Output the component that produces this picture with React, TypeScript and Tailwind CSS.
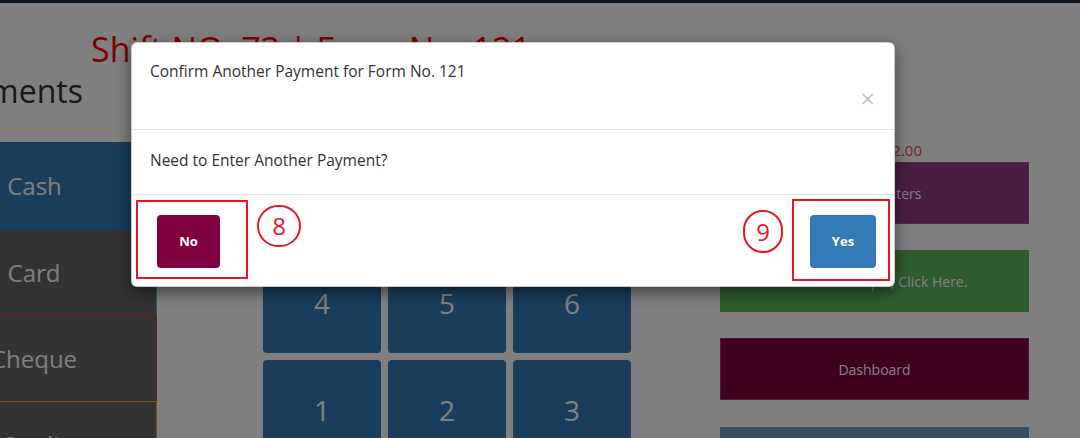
import React from "react";

const KEYS = ["7", "8", "9", "4", "5", "6", "1", "2", "3", "0", "00", "."];

function PayMethod({
  label,
  className,
}: {
  label: string;
  className: string;
}) {
  return (
    <div
      className={`flex items-center justify-center text-[24px] text-white ${className}`}
    >
      {label}
    </div>
  );
}

function Annotation({ n, className }: { n: number; className: string }) {
  return (
    <div
      className={`flex shrink-0 items-center justify-center rounded-full border-2 border-[#e8161f] text-[24px] leading-none text-[#e8161f] ${className}`}
    >
      {n}
    </div>
  );
}

export default function App() {
  return (
    <div className="relative h-[438px] w-[1080px] overflow-hidden bg-white font-['Open_Sans',sans-serif] text-[#333]">
      {/* page behind the dialog */}
      <div className="h-[3px] bg-[#1d2c45]" />
      <h1 className="mt-[29px] whitespace-nowrap pl-[91px] text-[34px] leading-none text-[#ff0000]">
        Shift NO. 73 | Form No. 121
      </h1>
      <h2 className="-ml-[64px] mt-[9px] whitespace-nowrap text-[32px] leading-none text-[#333]">
        Payments
      </h2>

      <div className="mt-[35px] flex items-start">
        <div className="-ml-[88px] flex w-[245px] shrink-0 flex-col">
          <PayMethod label="Cash" className="h-[88px] bg-[#337ab7]" />
          <PayMethod
            label="Card"
            className="h-[85px] border-r border-[#46b8da] bg-[#666]"
          />
          <PayMethod
            label="Cheque"
            className="h-[86px] border-r border-t border-[#d43f3a] bg-[#666]"
          />
          <PayMethod
            label="Credit"
            className="h-[86px] border-r border-t border-[#eea236] bg-[#666]"
          />
        </div>

        <div className="ml-[106px] mt-[4px] grid shrink-0 grid-cols-[118px_118px_118px] gap-[7px]">
          {KEYS.map((k) => (
            <div
              key={k}
              className="flex h-[100px] items-center justify-center rounded-[4px] bg-[#337ab7] text-[28px] text-white"
            >
              {k}
            </div>
          ))}
        </div>

        <div className="ml-[89px] flex w-[309px] shrink-0 flex-col">
          <div className="-mt-[2px] w-[202px] text-right text-[15px] leading-[20px] text-[#d9534f]">
            Balance : 12.00
          </div>
          <div className="mt-[2px] flex h-[62px] items-center justify-center border border-[#a3529a] bg-[#923c84] text-[14px] text-white">
            View Counters
          </div>
          <div className="mt-[26px] flex h-[62px] items-center justify-center bg-[#5cb85c] text-[14px] text-white">
            To Print Receipts, Click Here.
          </div>
          <div className="mt-[26px] flex h-[62px] items-center justify-center border border-[#a0326a] bg-[#800040] text-[14px] text-white">
            Dashboard
          </div>
          <div className="mt-[27px] flex h-[62px] items-center justify-center bg-[#769ebc] text-[14px] text-white">
            Logout
          </div>
        </div>
      </div>

      {/* backdrop */}
      <div className="absolute inset-0 bg-black/50" />

      {/* dialog */}
      <div className="absolute left-[131px] top-[42px] w-[764px] rounded-[6px] border border-black/20 bg-white shadow-[0_5px_15px_rgba(0,0,0,0.5)]">
        <div className="border-b border-[#e5e5e5] pb-[21px] pl-[18px] pr-[19px] pt-[18px]">
          <div className="text-[15.5px] leading-[21px]">
            Confirm Another Payment for Form No. 121
          </div>
          <div className="mt-[5px] flex h-[21px] items-center justify-end">
            <button className="text-[26px] leading-none text-black/25">
              ×
            </button>
          </div>
        </div>

        <div className="border-b border-[#e5e5e5] pb-[23px] pl-[18px] pt-[20px] text-[15.5px] leading-[21px]">
          Need to Enter Another Payment?
        </div>

        <div className="flex items-start justify-between px-[4px] pb-[5px] pt-[4px]">
          <div className="mt-[1px] flex items-start">
            <div className="h-[79px] w-[112px] border-2 border-[#e8161f] pl-[19px] pt-[13px]">
              <button className="flex h-[53px] w-[63px] items-center justify-center rounded-[4px] bg-[#800040] text-[13px] font-bold text-white">
                No
              </button>
            </div>
            <Annotation n={8} className="ml-[9px] mt-[5px] h-[42px] w-[44px]" />
          </div>

          <div className="flex items-start">
            <Annotation n={9} className="mr-[9px] mt-[11px] h-[43px] w-[40px]" />
            <div className="h-[82px] w-[98px] border-2 border-[#e8161f] pl-[16px] pt-[14px]">
              <button className="flex h-[53px] w-[66px] items-center justify-center rounded-[4px] bg-[#337ab7] text-[13px] font-bold text-white">
                Yes
              </button>
            </div>
          </div>
        </div>
      </div>
    </div>
  );
}
